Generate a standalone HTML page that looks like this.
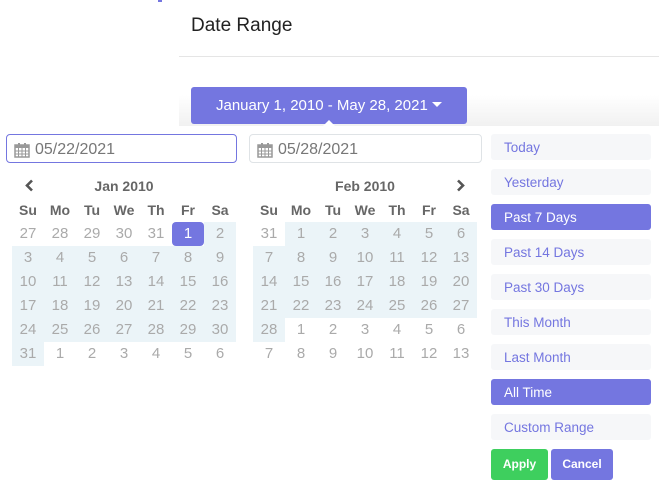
<!DOCTYPE html><html><head><style>
*{box-sizing:border-box;margin:0;padding:0}
body{width:659px;height:482px;overflow:hidden;background:#fff;font-family:"Liberation Sans",sans-serif;position:relative;color:#999}
.a{position:absolute}
.hd{left:191px;top:15px;font-size:19px;color:#222}
.line{left:179px;top:56px;width:480px;height:1px;background:#e5e5e5}
.shade{left:179px;top:95px;width:480px;height:31px;background:linear-gradient(#fff,#f1f1f1)}
.btn{left:191px;top:87px;width:276px;height:37px;background:#7476e0;border-radius:3px;color:#fff;font-size:15px;text-align:center;line-height:37px}
.panel{left:0;top:126px;width:659px;height:356px;background:#fff}
.notch{left:323px;top:120px;width:0;height:0;border-left:6px solid transparent;border-right:6px solid transparent;border-bottom:6px solid #fff}
.inp{height:29px;border:1px solid #dfe3e6;border-radius:4px;font-size:16px;color:#777;line-height:29px;padding-left:28px}
.inp svg{position:absolute;left:7px;top:7px}
.cal{width:224px}
.row{display:flex;height:24px}
.row div{width:32px;text-align:center;line-height:24px;font-size:15px;color:#aaa}
.row.dow div{color:#666;font-weight:bold;font-size:14px}
.row div.r{background:#ebf4f8}
.row div.s{background:#7476e0;color:#fff;border-radius:4px}
.mt{font-weight:bold;font-size:14px;color:#666;text-align:center}
.rg{left:491px;width:160px;height:26px;background:#f6f7f9;border-radius:3px;color:#7476e0;font-size:13.5px;line-height:28px;padding-left:13px}
.rg.on{background:#7476e0;color:#fff}
.b2{top:449px;height:31px;border-radius:3px;color:#fff;font-size:12px;font-weight:bold;text-align:center;line-height:31px}
</style></head><body>
<div class="a" style="left:158px;top:0;width:4px;height:2px;background:#7476e0"></div>
<div class="a hd">Date Range</div>
<div class="a line"></div>
<div class="a shade"></div>
<div class="a panel"></div>
<div class="a btn">January 1, 2010 - May 28, 2021 <svg width="10" height="6" viewBox="0 0 10 6" style="vertical-align:2px"><path d="M0 0H10L5 5Z" fill="#fff"/></svg></div>
<div class="a notch"></div>

<div class="a inp" style="left:6px;top:134px;width:231px;border-color:#7476e0"><svg width="16" height="16" viewBox="0 0 16 16"><rect x="1" y="3" width="14" height="12" fill="none" stroke="#999" stroke-width="1.5"/><rect x="1" y="3" width="14" height="3" fill="#999"/><rect x="4" y="1" width="2" height="3" fill="#999"/><rect x="10" y="1" width="2" height="3" fill="#999"/><path d="M1 9H15M1 12H15M4.5 6V15M8 6V15M11.5 6V15" stroke="#999"/></svg>05/22/2021</div>
<div class="a inp" style="left:249px;top:134px;width:233px"><svg width="16" height="16" viewBox="0 0 16 16"><rect x="1" y="3" width="14" height="12" fill="none" stroke="#999" stroke-width="1.5"/><rect x="1" y="3" width="14" height="3" fill="#999"/><rect x="4" y="1" width="2" height="3" fill="#999"/><rect x="10" y="1" width="2" height="3" fill="#999"/><path d="M1 9H15M1 12H15M4.5 6V15M8 6V15M11.5 6V15" stroke="#999"/></svg>05/28/2021</div>

<svg class="a" style="left:24px;top:179px" width="10" height="13" viewBox="0 0 10 13"><path d="M8 1.5L3 6.5L8 11.5" fill="none" stroke="#555" stroke-width="2.6"/></svg>
<div class="a mt" style="left:12px;top:178px;width:224px">Jan 2010</div>
<svg class="a" style="left:456px;top:179px" width="10" height="13" viewBox="0 0 10 13"><path d="M2 1.5L7 6.5L2 11.5" fill="none" stroke="#555" stroke-width="2.6"/></svg>
<div class="a mt" style="left:253px;top:178px;width:224px">Feb 2010</div>

<div class="a cal" style="left:12px;top:198px">
<div class="row dow"><div>Su</div><div>Mo</div><div>Tu</div><div>We</div><div>Th</div><div>Fr</div><div>Sa</div></div>
<div class="row"><div>27</div><div>28</div><div>29</div><div>30</div><div>31</div><div class="s">1</div><div class="r">2</div></div>
<div class="row"><div class="r">3</div><div class="r">4</div><div class="r">5</div><div class="r">6</div><div class="r">7</div><div class="r">8</div><div class="r">9</div></div>
<div class="row"><div class="r">10</div><div class="r">11</div><div class="r">12</div><div class="r">13</div><div class="r">14</div><div class="r">15</div><div class="r">16</div></div>
<div class="row"><div class="r">17</div><div class="r">18</div><div class="r">19</div><div class="r">20</div><div class="r">21</div><div class="r">22</div><div class="r">23</div></div>
<div class="row"><div class="r">24</div><div class="r">25</div><div class="r">26</div><div class="r">27</div><div class="r">28</div><div class="r">29</div><div class="r">30</div></div>
<div class="row"><div class="r">31</div><div>1</div><div>2</div><div>3</div><div>4</div><div>5</div><div>6</div></div>
</div>

<div class="a cal" style="left:253px;top:198px">
<div class="row dow"><div>Su</div><div>Mo</div><div>Tu</div><div>We</div><div>Th</div><div>Fr</div><div>Sa</div></div>
<div class="row"><div>31</div><div class="r">1</div><div class="r">2</div><div class="r">3</div><div class="r">4</div><div class="r">5</div><div class="r">6</div></div>
<div class="row"><div class="r">7</div><div class="r">8</div><div class="r">9</div><div class="r">10</div><div class="r">11</div><div class="r">12</div><div class="r">13</div></div>
<div class="row"><div class="r">14</div><div class="r">15</div><div class="r">16</div><div class="r">17</div><div class="r">18</div><div class="r">19</div><div class="r">20</div></div>
<div class="row"><div class="r">21</div><div class="r">22</div><div class="r">23</div><div class="r">24</div><div class="r">25</div><div class="r">26</div><div class="r">27</div></div>
<div class="row"><div class="r">28</div><div>1</div><div>2</div><div>3</div><div>4</div><div>5</div><div>6</div></div>
<div class="row"><div>7</div><div>8</div><div>9</div><div>10</div><div>11</div><div>12</div><div>13</div></div>
</div>

<div class="a rg" style="top:134px">Today</div>
<div class="a rg" style="top:169px">Yesterday</div>
<div class="a rg on" style="top:204px">Past 7 Days</div>
<div class="a rg" style="top:239px">Past 14 Days</div>
<div class="a rg" style="top:274px">Past 30 Days</div>
<div class="a rg" style="top:309px">This Month</div>
<div class="a rg" style="top:344px">Last Month</div>
<div class="a rg on" style="top:379px">All Time</div>
<div class="a rg" style="top:414px">Custom Range</div>
<div class="a b2" style="left:491px;width:57px;background:#3ecf5e">Apply</div>
<div class="a b2" style="left:551px;width:62px;background:#7476e0">Cancel</div>
</body></html>
